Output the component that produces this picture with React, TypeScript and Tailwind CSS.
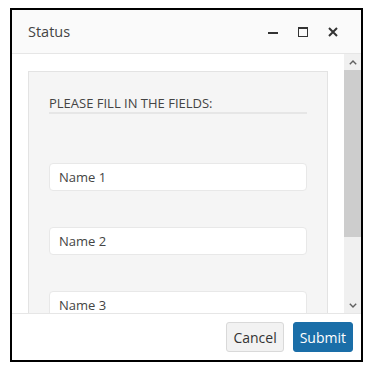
import { useState } from 'react';

const fields = ['Name 1', 'Name 2', 'Name 3', 'Name 4'];

const ChevronUp = () => (
  <svg width="8" height="5" viewBox="0 0 8 5" fill="none">
    <path d="M0.8 4.2 L4 1 L7.2 4.2" stroke="#606060" strokeWidth="1.4" />
  </svg>
);

const ChevronDown = () => (
  <svg width="8" height="5" viewBox="0 0 8 5" fill="none">
    <path d="M0.8 0.8 L4 4 L7.2 0.8" stroke="#606060" strokeWidth="1.4" />
  </svg>
);

const App = () => {
  const [values, setValues] = useState<string[]>(fields.map(() => ''));

  return (
    <div className="pt-[8px] pl-[10px] bg-white h-[375px]" style={{ fontFamily: '"Open Sans", "Noto Sans", sans-serif' }}>
      <div className="w-[353px] h-[354px] border-2 border-black bg-white flex flex-col">
        {/* Title bar */}
        <div className="h-[44px] shrink-0 flex items-center border-b border-[#e6e6e6] bg-[#fafafa] pl-[16px] pr-[23px]">
          <span className="text-[14.5px] text-[#444] flex-1">Status</span>
          <div className="flex items-center gap-[20px]">
            <svg width="10" height="10" viewBox="0 0 10 10">
              <rect x="0" y="5" width="10" height="2" fill="#333" />
            </svg>
            <svg width="10" height="10" viewBox="0 0 10 10" fill="none">
              <rect x="0.5" y="0.5" width="9" height="9" stroke="#333" strokeWidth="1" />
              <rect x="0" y="0" width="10" height="2" fill="#333" />
            </svg>
            <svg width="10" height="10" viewBox="0 0 10 10" fill="none">
              <path d="M1 1 L9 9 M9 1 L1 9" stroke="#333" strokeWidth="2" />
            </svg>
          </div>
        </div>

        {/* Body */}
        <div className="flex-1 flex min-h-0">
          <div className="flex-1 overflow-hidden pt-[17px] px-[16px]">
            <div className="bg-[#f5f5f5] border border-[#e3e3e3] px-[20px] pt-[23px] pb-[30px]">
              <div className="text-[13px] leading-[16px] text-[#444] pb-[1px] border-b-2 border-[#e6e6e6]">
                PLEASE FILL IN THE FIELDS:
              </div>
              <div className="flex flex-col gap-[36px] mt-[49px]">
                {fields.map((f, i) => (
                  <input
                    key={f}
                    value={values[i]}
                    placeholder={f}
                    onChange={(e) => setValues(values.map((v, j) => (j === i ? e.target.value : v)))}
                    className="h-[28px] bg-white border border-[#e8e8e8] rounded-[4px] px-[9px] text-[13px] text-[#333] placeholder:text-[#444] outline-none"
                  />
                ))}
              </div>
            </div>
          </div>
          {/* Scrollbar */}
          <div className="w-[17px] bg-[#f0f0f0] flex flex-col">
            <div className="h-[16px] flex items-center justify-center">
              <ChevronUp />
            </div>
            <div className="h-[167px] bg-[#cdcdcd]" />
            <div className="flex-1" />
            <div className="h-[16px] flex items-center justify-center">
              <ChevronDown />
            </div>
          </div>
        </div>

        {/* Footer */}
        <div className="h-[47px] shrink-0 border-t border-[#e6e6e6] flex items-start justify-end gap-[9px] pt-[8px] pr-[8px]">
          <button className="h-[30px] px-[6px] bg-[#f2f2f2] border border-[#d9d9d9] rounded-[3px] text-[14px] text-[#333]">
            Cancel
          </button>
          <button className="h-[30px] px-[6px] bg-[#1a6ea8] border border-[#1a6ea8] rounded-[3px] text-[14px] text-white">
            Submit
          </button>
        </div>
      </div>
    </div>
  );
};

export default App;
